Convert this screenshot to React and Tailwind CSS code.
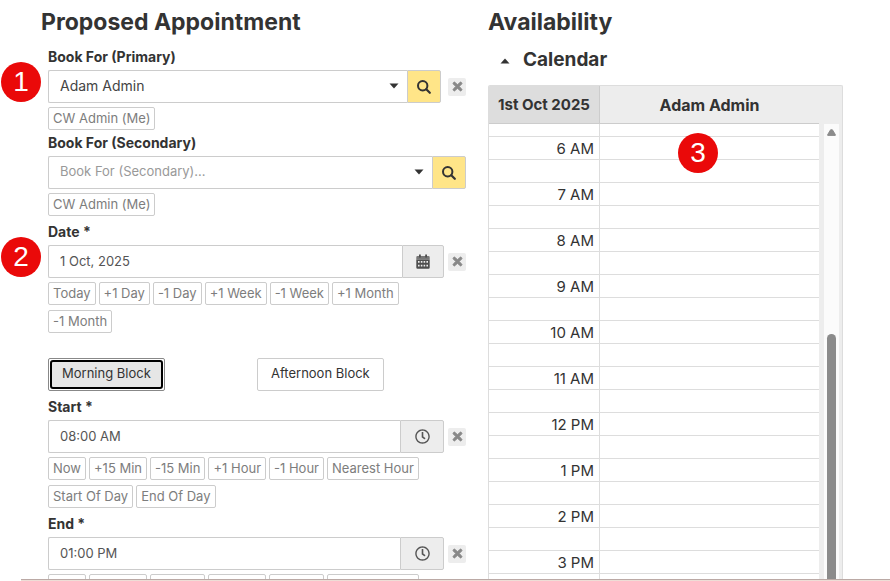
import { FaTimes, FaRegClock } from 'react-icons/fa';

const ICON_BUTTON = 'flex h-[33px] shrink-0 items-center justify-center rounded-r-[2px] border border-[#ccc]';

function SearchIcon() {
  return (
    <svg viewBox="0 0 14 14" className="size-[14px]" fill="none" stroke="currentColor" strokeLinecap="round">
      <circle cx="5.7" cy="5.7" r="4.7" strokeWidth="2" />
      <path d="M9.3 9.3l3.5 3.5" strokeWidth="2.2" />
    </svg>
  );
}

function CalendarIcon() {
  return (
    <svg viewBox="0 0 14 15" className="h-[15px] w-[14px]">
      <path d="M1.5 2h11A1.2 1.2 0 0 1 13.7 3.2V5.5H0.3V3.2A1.2 1.2 0 0 1 1.5 2z" fill="#777" />
      <path d="M3 0.4h1.8v3.2H3zM9.2 0.4H11v3.2H9.2z" fill="#4d4d4d" />
      <path d="M0.3 5.5h13.4v8A1.2 1.2 0 0 1 12.5 14.7h-11A1.2 1.2 0 0 1 0.3 13.5z" fill="#4d4d4d" />
      <path
        d="M2 7h1.6v1.8H2zM4.8 7h1.6v1.8H4.8zM7.6 7h1.6v1.8H7.6zM10.4 7H12v1.8h-1.6zM2 10.8h1.6v1.8H2zM4.8 10.8h1.6v1.8H4.8zM7.6 10.8h1.6v1.8H7.6zM10.4 10.8H12v1.8h-1.6z"
        fill="#ededed"
      />
    </svg>
  );
}

function Badge({ children, className }) {
  return (
    <span
      className={`absolute flex size-10 items-center justify-center rounded-full bg-[#ea0909] font-['Liberation_Sans',sans-serif] text-[28px] leading-none text-white ${className}`}
    >
      {children}
    </span>
  );
}

function Label({ htmlFor, children }) {
  return (
    <label htmlFor={htmlFor} className="block text-[14px] leading-[26px] font-bold">
      {children}
    </label>
  );
}

function Chips({ items }) {
  return (
    <div className="mt-1 mr-[22px] flex flex-wrap gap-x-[3px] gap-y-[5px]">
      {items.map((item) => (
        <button
          key={item}
          type="button"
          className="h-[23px] rounded-[2px] border border-[#ccc] px-1 text-[13px] leading-[19px] whitespace-nowrap text-[#7d7d7d]"
        >
          {item}
        </button>
      ))}
    </div>
  );
}

function ClearButton({ label }) {
  return (
    <button
      type="button"
      aria-label={label}
      className="flex size-[18px] shrink-0 items-center justify-center rounded-[2px] bg-[#ededed] text-[#888]"
    >
      <FaTimes size={13} stroke="currentColor" strokeWidth={36} />
    </button>
  );
}

function SelectField({ id, label, value, muted, clearable, badge }) {
  return (
    <div>
      <Label htmlFor={id}>{label}</Label>
      <div className="relative flex items-center">
        {badge && <Badge className="-top-2 -left-[47px]">{badge}</Badge>}
        <div className="relative min-w-0 flex-1">
          <select
            id={id}
            className={`block h-[33px] w-full appearance-none rounded-l-[2px] border border-r-0 border-[#ccc] bg-white px-[11px] pb-[2px] ${muted ? 'text-[13px] text-[#999]' : 'text-[14px] text-[#444]'}`}
          >
            <option>{value}</option>
          </select>
          <svg viewBox="0 0 10 6" className="pointer-events-none absolute top-[13px] right-2 h-[6px] w-[10px]">
            <path d="M0.5 0.5h9L5 5.5z" fill="#333" />
          </svg>
        </div>
        <button type="button" aria-label={`Search ${label}`} className={`${ICON_BUTTON} w-[34px] bg-[#ffe588] text-[#333]`}>
          <SearchIcon />
        </button>
        {clearable && (
          <div className="ml-[7px]">
            <ClearButton label={`Clear ${label}`} />
          </div>
        )}
      </div>
      <Chips items={['CW Admin (Me)']} />
    </div>
  );
}

function PickerField({ id, label, value, icon, wide, chips, badge }) {
  return (
    <div className="mt-[3px]">
      <Label htmlFor={id}>{label} *</Label>
      <div className="relative flex items-center">
        {badge && <Badge className="-top-2 -left-[47px]">{badge}</Badge>}
        <input
          id={id}
          type="text"
          defaultValue={value}
          className="h-[33px] min-w-0 flex-1 rounded-l-[2px] border border-r-0 border-[#ccc] bg-white px-[11px] pb-[2px] text-[13px] text-[#555]"
        />
        <button
          type="button"
          aria-label={`Pick ${label}`}
          className={`${ICON_BUTTON} bg-[#ededed] text-[#555] ${wide ? 'w-11' : 'w-[42px]'}`}
        >
          {icon}
        </button>
        <div className="ml-1">
          <ClearButton label={`Clear ${label}`} />
        </div>
      </div>
      <Chips items={chips} />
    </div>
  );
}

const TIME_CHIPS = ['Now', '+15 Min', '-15 Min', '+1 Hour', '-1 Hour', 'Nearest Hour', 'Start Of Day', 'End Of Day'];
const HOURS = ['6 AM', '7 AM', '8 AM', '9 AM', '10 AM', '11 AM', '12 PM', '1 PM', '2 PM', '3 PM'];
const SLOTS = HOURS.flatMap((hour) => [hour, '']);

function Calendar() {
  return (
    <div className="mt-[11px] flex min-h-0 flex-1 flex-col overflow-hidden rounded-t-[2px] border border-b-0 border-[#ddd] bg-[#ededed]">
      <div className="flex min-h-0 flex-1">
        <table className="w-full table-fixed border-separate border-spacing-0 self-start text-[15px]">
          <colgroup>
            <col className="w-[111px]" />
            <col />
          </colgroup>
          <thead>
            <tr className="h-[38px]">
              <th className="border-r border-b border-[#ccc] bg-[#ddd] p-0 pt-px font-bold whitespace-nowrap">1st Oct 2025</th>
              <th className="border-b border-[#ccc] p-0 pt-px text-[16px] font-bold">Adam Admin</th>
            </tr>
          </thead>
          <tbody className="bg-white">
            <tr className="h-[13px]">
              <td className="border-r border-b border-[#ddd] p-0" />
              <td className="border-b border-[#ddd] p-0" />
            </tr>
            {SLOTS.map((slot, i) => (
              <tr key={i} className="h-[23px]">
                <td className="border-r border-b border-[#ddd] p-0 pt-[2px] pr-[5px] text-right leading-[20px]">{slot}</td>
                <td className="border-b border-[#ddd] p-0" />
              </tr>
            ))}
          </tbody>
        </table>
        <div className="mt-[38px] mr-[3px] ml-[5px] flex w-[15px] shrink-0 flex-col items-center bg-[#fbfbfb] pt-[5px]">
          <svg viewBox="0 0 9 7" className="h-[7px] w-[9px] shrink-0">
            <path d="M3.6 0.8h1.8L8.3 5.6v0.8H0.7V5.6z" fill="#8b8b8b" stroke="#8b8b8b" strokeLinejoin="round" />
          </svg>
          <div className="h-[198px] shrink-0" />
          <div className="w-[9px] flex-1 rounded-t-full bg-[#8b8b8b]" />
        </div>
      </div>
    </div>
  );
}

export default function App() {
  return (
    <div className="flex h-screen flex-col overflow-hidden bg-white font-['Inter',sans-serif] text-[#333]">
      <main className="grid min-h-0 flex-1 grid-cols-[425fr_355fr] grid-rows-1 gap-[22px] overflow-hidden pr-[47px] pl-[41px]">
        <section className="min-w-0">
          <h1 className="h-11 text-[23px] leading-[44px] font-bold">Proposed Appointment</h1>
          <div className="pl-[7px]">
            <SelectField id="primary" label="Book For (Primary)" value="Adam Admin" clearable badge="1" />
            <SelectField id="secondary" label="Book For (Secondary)" value="Book For (Secondary)..." muted />
            <PickerField
              id="date"
              label="Date"
              value="1 Oct, 2025"
              icon={<CalendarIcon />}
              chips={['Today', '+1 Day', '-1 Day', '+1 Week', '-1 Week', '+1 Month', '-1 Month']}
              badge="2"
            />
            <div className="mt-[25px] grid grid-cols-2 text-[13px]">
              <div>
                <button type="button" className="h-[33px] rounded-[2px] border border-[#888] p-px">
                  <span className="flex h-full items-center rounded-[3px] border-2 border-black bg-[#e6e6e6] px-[10px] pb-px">Morning Block</span>
                </button>
              </div>
              <div>
                <button type="button" className="h-[33px] rounded-[2px] border border-[#ccc] px-[13px] pb-px">Afternoon Block</button>
              </div>
            </div>
            <PickerField id="start" label="Start" value="08:00 AM" icon={<FaRegClock size={15} />} wide chips={TIME_CHIPS} />
            <PickerField id="end" label="End" value="01:00 PM" icon={<FaRegClock size={15} />} wide chips={TIME_CHIPS} />
          </div>
        </section>
        <section className="relative flex min-h-0 min-w-0 flex-col">
          <h2 className="h-11 shrink-0 text-[23px] leading-[44px] font-bold">Availability</h2>
          <h3 className="flex h-[30px] shrink-0 items-center gap-[13px] pt-[3px] pl-3 text-[19px] font-bold">
            <svg viewBox="0 0 10 6" className="h-[6px] w-[10px]">
              <path d="M0.5 5.5h9L5 0.5z" fill="#333" />
            </svg>
            Calendar
          </h3>
          <Calendar />
          <Badge className="top-[133px] left-[190px]">3</Badge>
        </section>
      </main>
      <div className="ml-[21px] h-[2px] shrink-0 border-t border-[#bba9a5] bg-[#eeddd6]" />
    </div>
  );
}
